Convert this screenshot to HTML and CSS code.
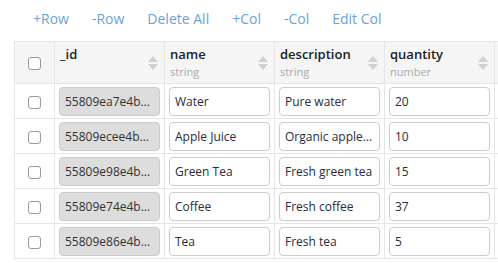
FILE: index.html
```html
<!DOCTYPE html>
<html lang="en">
<head>
    <meta charset="UTF-8">
    <title>Grid Editor</title>
    <link rel="stylesheet" href="styles.css">
</head>
<body>
    <div class="toolbar">
        <a class="tool" href="#">+Row</a>
        <a class="tool" href="#">-Row</a>
        <a class="tool" href="#">Delete All</a>
        <a class="tool" href="#">+Col</a>
        <a class="tool" href="#">-Col</a>
        <a class="tool" href="#">Edit Col</a>
    </div>

    <table class="grid">
        <colgroup>
            <col class="w-check">
            <col class="w-col">
            <col class="w-col">
            <col class="w-col">
            <col class="w-col">
            <col class="w-rest">
        </colgroup>
        <thead>
            <tr>
                <th class="check-col"><span class="box"></span></th>
                <th><div class="head"><div><div class="title">_id</div><div class="type">&nbsp;</div></div><span class="sort"></span></div></th>
                <th><div class="head"><div><div class="title">name</div><div class="type">string</div></div><span class="sort"></span></div></th>
                <th><div class="head"><div><div class="title">description</div><div class="type">string</div></div><span class="sort"></span></div></th>
                <th><div class="head"><div><div class="title">quantity</div><div class="type">number</div></div><span class="sort"></span></div></th>
                <th></th>
            </tr>
        </thead>
        <tbody>
            <tr>
                <td class="check-col"><span class="box"></span></td>
                <td><div class="field locked">55809ea7e4b…</div></td>
                <td><div class="field">Water</div></td>
                <td><div class="field">Pure water</div></td>
                <td><div class="field">20</div></td>
                <td></td>
            </tr>
            <tr>
                <td class="check-col"><span class="box"></span></td>
                <td><div class="field locked">55809ecee4b…</div></td>
                <td><div class="field">Apple Juice</div></td>
                <td><div class="field">Organic apple…</div></td>
                <td><div class="field">10</div></td>
                <td></td>
            </tr>
            <tr>
                <td class="check-col"><span class="box"></span></td>
                <td><div class="field locked">55809e98e4b…</div></td>
                <td><div class="field">Green Tea</div></td>
                <td><div class="field">Fresh green tea</div></td>
                <td><div class="field">15</div></td>
                <td></td>
            </tr>
            <tr>
                <td class="check-col"><span class="box"></span></td>
                <td><div class="field locked">55809e74e4b…</div></td>
                <td><div class="field">Coffee</div></td>
                <td><div class="field">Fresh coffee</div></td>
                <td><div class="field">37</div></td>
                <td></td>
            </tr>
            <tr>
                <td class="check-col"><span class="box"></span></td>
                <td><div class="field locked">55809e86e4b…</div></td>
                <td><div class="field">Tea</div></td>
                <td><div class="field">Fresh tea</div></td>
                <td><div class="field">5</div></td>
                <td></td>
            </tr>
        </tbody>
    </table>
</body>
</html>
```

FILE: styles.css
```css
body { margin: 0; padding: 4px 14px; font-family: 'Open Sans', sans-serif; font-size: 12px; color: #333; background: #fff; overflow: hidden; }
.toolbar { display: flex; gap: 23px; padding-left: 19px; height: 29px; align-items: center; margin-bottom: 8px; }
.tool { color: #6aa3d8; text-decoration: none; font-size: 14px; }
.grid { border-collapse: collapse; table-layout: fixed; width: 590px; }
.w-check { width: 40px; }
.w-col { width: 110px; }
.w-rest { width: 110px; }
.grid th, .grid td { border: 1px solid #e6e6e6; padding: 0; }
.grid thead th { background: #f5f5f5; height: 41px; text-align: left; font-weight: normal; }
.grid .check-col { text-align: center; }
.head { display: flex; align-items: center; justify-content: space-between; padding: 0 5px; }
.title { font-weight: 600; color: #222; font-size: 13px; line-height: 18px; }
.type { color: #aaa; font-size: 11px; line-height: 17px; }
.sort { width: 10px; height: 14px; position: relative; margin-right: 1px; }
.sort::before, .sort::after { content: ""; position: absolute; left: 0; border-left: 5px solid transparent; border-right: 5px solid transparent; }
.sort::before { top: 0; border-bottom: 6px solid #d0d0d0; }
.sort::after { bottom: 0; border-top: 6px solid #d0d0d0; }
.box { display: inline-block; width: 11px; height: 11px; border: 1px solid #999; border-radius: 3px; background: #fff; vertical-align: middle; }
.grid tbody td { height: 34px; }
.field { margin: 0 4px; height: 27px; line-height: 27px; border: 1px solid #ccc; border-radius: 4px; padding: 0 5px; white-space: nowrap; overflow: hidden; color: #2b2b3b; background: #fff; }
.field.locked { background: #ddd; color: #333; }
```
